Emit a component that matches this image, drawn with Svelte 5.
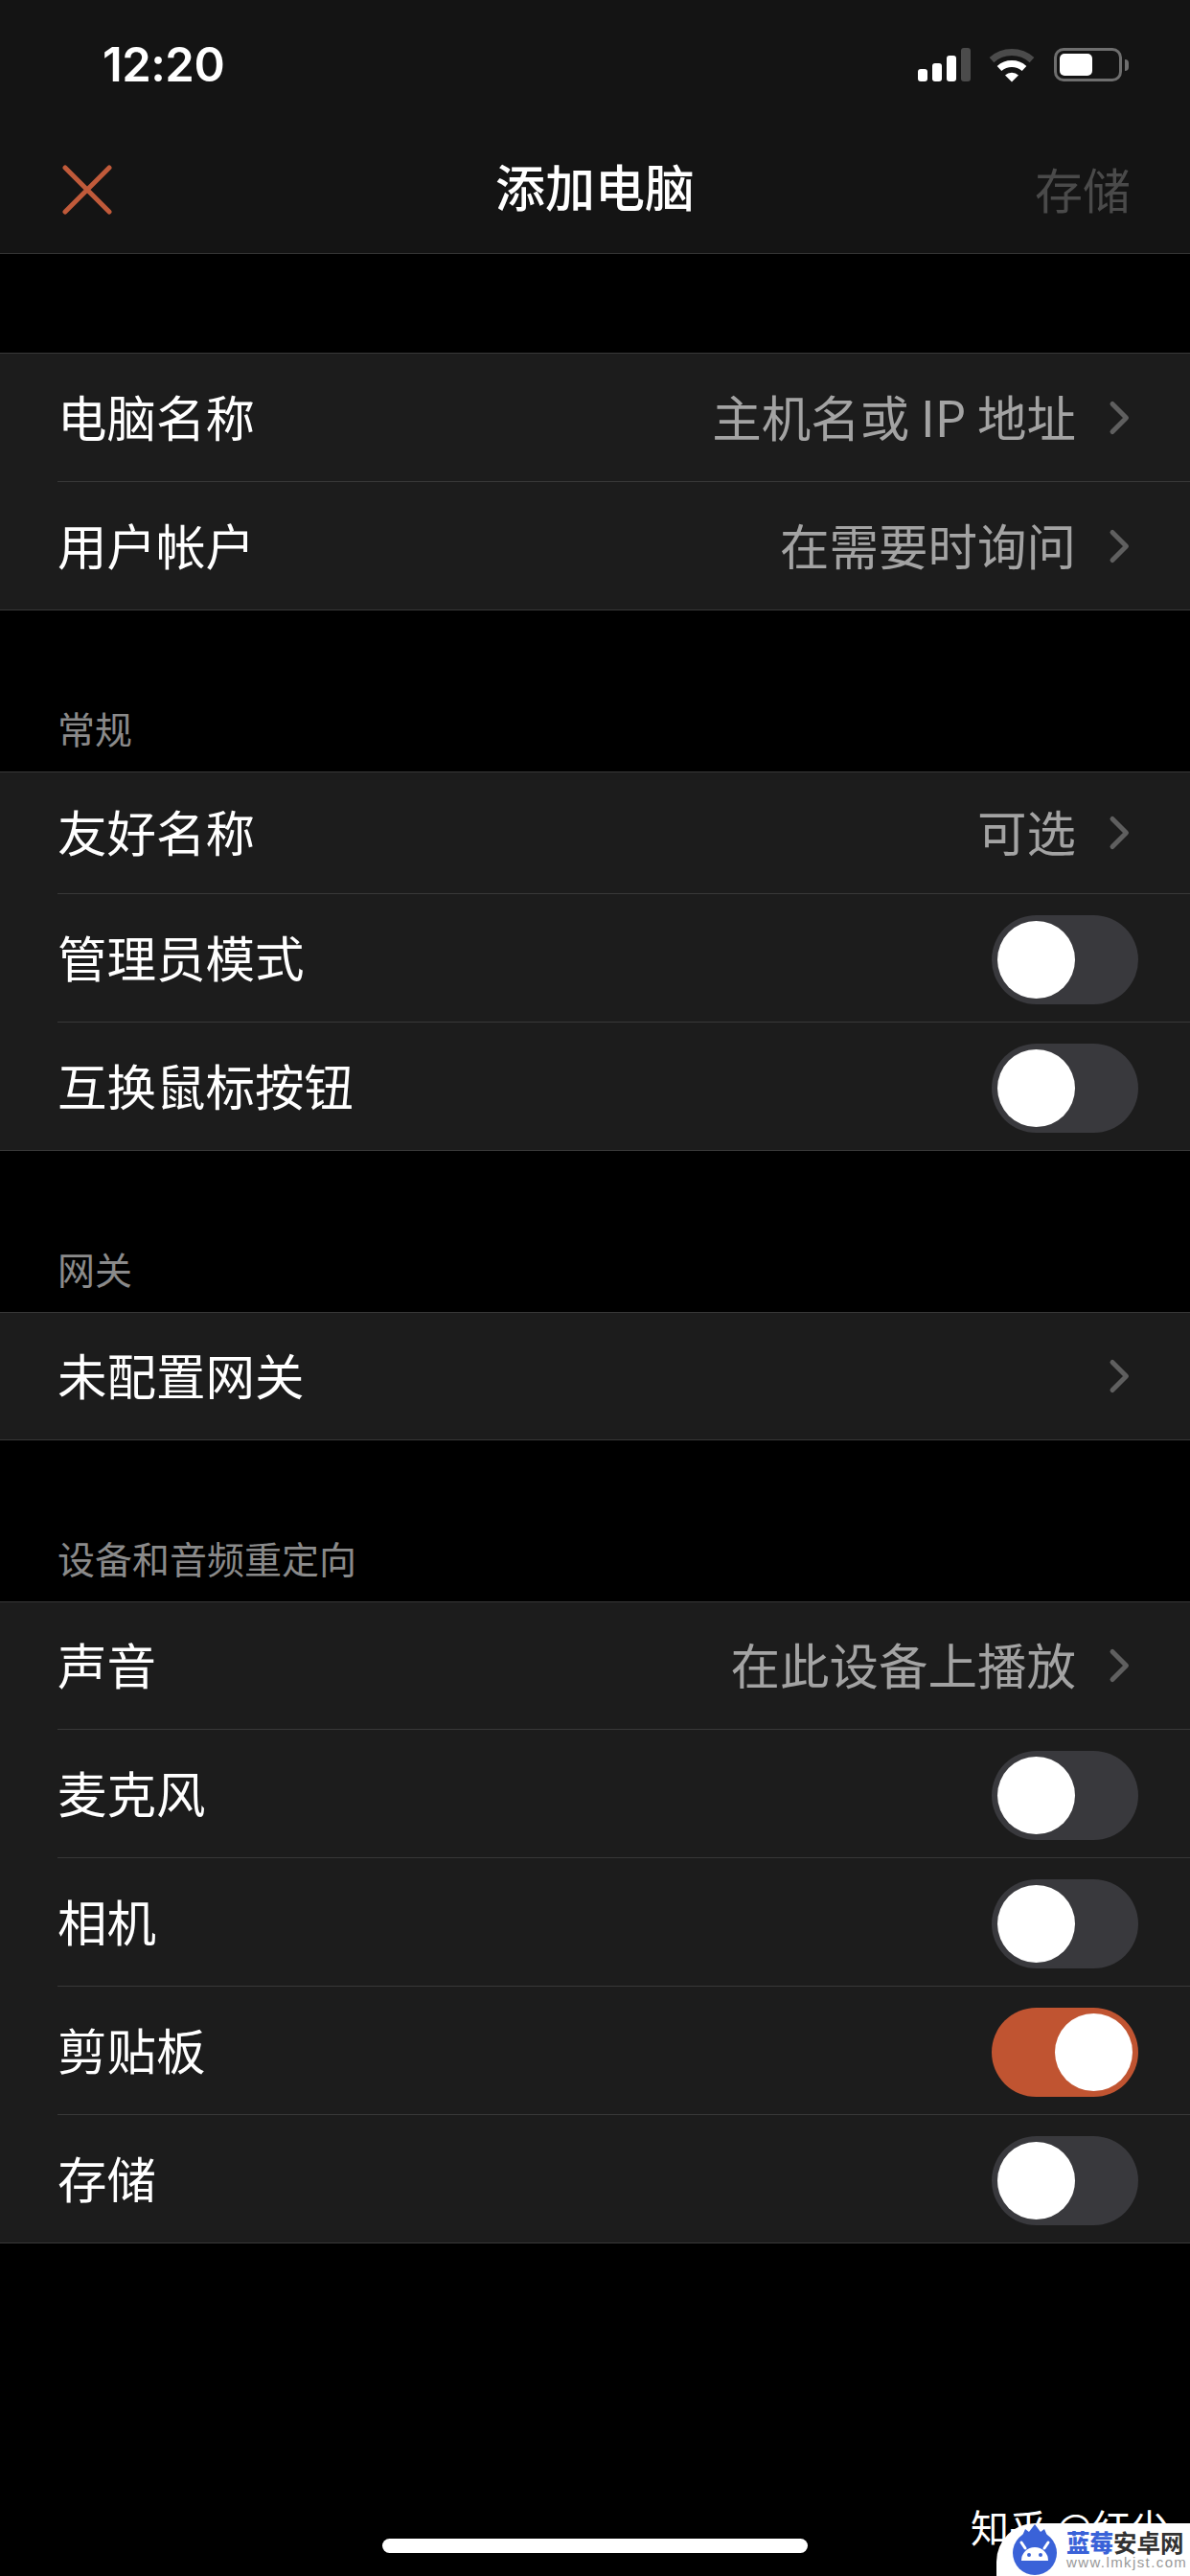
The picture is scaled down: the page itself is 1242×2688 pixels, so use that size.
<script>
  const groups = [
    { label: '', rows: [
      { t: '电脑名称', v: '主机名或 IP 地址', h: 133 },
      { t: '用户帐户', v: '在需要时询问', h: 133 }
    ]},
    { label: '常规', rows: [
      { t: '友好名称', v: '可选', h: 126 },
      { t: '管理员模式', sw: false, h: 133 },
      { t: '互换鼠标按钮', sw: false, h: 133 }
    ]},
    { label: '网关', rows: [
      { t: '未配置网关', v: '', h: 132 }
    ]},
    { label: '设备和音频重定向', rows: [
      { t: '声音', v: '在此设备上播放', h: 132 },
      { t: '麦克风', sw: false, h: 133 },
      { t: '相机', sw: false, h: 133 },
      { t: '剪贴板', sw: true, h: 133 },
      { t: '存储', sw: false, h: 133 }
    ]}
  ];
</script>

<div class="page">
  <header class="head">
    <div class="status">
      <span class="time">12:20</span>
      <div class="indicators">
        <div class="signal">
          <i class="b1"></i><i class="b2"></i><i class="b3"></i><i class="b4"></i>
        </div>
        <svg class="wifi" width="48" height="36" viewBox="0 0 48 36" aria-hidden="true">
          <path d="M3 12.6A31.5 31.5 0 0 1 45 12.6" fill="none" stroke="#4b4b4b" stroke-width="7"/>
          <path d="M11 21.5A19.5 19.5 0 0 1 37 21.5" fill="none" stroke="#fff" stroke-width="7"/>
          <path d="M24 35.5L17 28.5A10 10 0 0 1 31 28.5Z" fill="#fff"/>
        </svg>
        <div class="battery"><div class="level"></div></div>
        <div class="tip"></div>
      </div>
    </div>
    <nav class="nav">
      <svg class="close" width="52" height="52" viewBox="0 0 52 52" aria-hidden="true">
        <path d="M3 3L49 49M49 3L3 49" stroke="#c05a3a" stroke-width="5" stroke-linecap="round"/>
      </svg>
      <span class="title">添加电脑</span>
      <span class="save">存储</span>
    </nav>
  </header>

  {#each groups as g, i}
    <div class="label" class:first={i === 0}>{g.label}</div>
    <section class="group">
      {#each g.rows as r, j}
        <div class="row" class:last={j === g.rows.length - 1} style="height:{r.h}px">
          <span class="name">{r.t}</span>
          {#if r.sw !== undefined}
            <span class="switch" class:on={r.sw}><span class="knob"></span></span>
          {:else}
            <span class="value">{r.v}</span>
            <svg class="chev" width="24" height="38" viewBox="0 0 24 38" aria-hidden="true">
              <path d="M5 4.5L19.5 19L5 33.5" fill="none" stroke="#5f5f5f" stroke-width="5" stroke-linecap="round" stroke-linejoin="round"/>
            </svg>
          {/if}
        </div>
      {/each}
    </section>
  {/each}

  <div class="zhihu">知乎 @红尖</div>
  <div class="home"></div>

  <div class="mark">
    <svg class="logo" width="46" height="54" viewBox="0 0 46 54" aria-hidden="true">
      <path d="M10 13L13 6L17 9L23 1L29 9L33 6L36 13Z" fill="#3a62d8"/>
      <circle cx="23" cy="31" r="23" fill="#3a62d8"/>
      <path d="M9 39A14 14 0 0 1 37 39Z" fill="#fff"/>
      <path d="M13 26L9 20M33 26L37 20" stroke="#fff" stroke-width="3" stroke-linecap="round"/>
      <circle cx="17" cy="33" r="2" fill="#3a62d8"/>
      <circle cx="29" cy="33" r="2" fill="#3a62d8"/>
    </svg>
    <div class="brand">
      <div class="cn"><b>蓝莓</b>安卓网</div>
      <div class="url">www.lmkjst.com</div>
    </div>
  </div>
</div>

<style>
  :global(body) {
    margin: 0;
    background: #000;
  }
  .page {
    position: relative;
    width: 1242px;
    height: 2688px;
    overflow: hidden;
    background: #000;
    color: #fff;
    font-family: "Noto Sans CJK SC", "Noto Sans", sans-serif;
  }
  .head {
    height: 264px;
    background: #141414;
    border-bottom: 1px solid #343434;
    display: flex;
    flex-direction: column;
  }
  .status {
    height: 134px;
    display: flex;
    justify-content: space-between;
    padding: 0 64px 0 107px;
    flex: none;
  }
  .time {
    font-family: Inter, sans-serif;
    font-weight: 600;
    font-size: 49px;
    line-height: 58px;
    margin-top: 39px;
    letter-spacing: -0.5px;
  }
  .indicators {
    display: flex;
    align-items: flex-start;
    padding-top: 50px;
  }
  .signal {
    display: flex;
    align-items: flex-end;
    gap: 5px;
    height: 35px;
  }
  .signal i {
    display: block;
    width: 10px;
    border-radius: 3px;
    background: #fff;
  }
  .b1 { height: 13px; }
  .b2 { height: 19px; }
  .b3 { height: 27px; }
  .signal .b4 { height: 35px; background: #4b4b4b; }
  .wifi {
    margin-left: 19px;
  }
  .battery {
    margin-left: 20px;
    width: 71px;
    height: 35px;
    box-sizing: border-box;
    border: 3px solid #6e6e6e;
    border-radius: 10px;
    padding: 3px;
  }
  .level {
    width: 34px;
    height: 100%;
    background: #fff;
    border-radius: 5px;
  }
  .tip {
    width: 4px;
    height: 12px;
    margin: 12px 0 0 3px;
    background: #6e6e6e;
    border-radius: 0 4px 4px 0;
  }
  .nav {
    flex: 1;
    display: flex;
    align-items: center;
    justify-content: space-between;
    padding: 0 62px 3px 65px;
    position: relative;
  }
  .title {
    position: absolute;
    left: 0;
    right: 0;
    top: 30px;
    text-align: center;
    font-size: 52px;
    font-weight: 500;
    line-height: 60px;
  }
  .save {
    font-size: 50px;
    line-height: 60px;
    color: #4a4a4a;
    margin-bottom: 3px;
  }
  .label {
    height: 168px;
    box-sizing: border-box;
    padding: 0 0 23px 60px;
    display: flex;
    align-items: flex-end;
    font-size: 39px;
    line-height: 46px;
    color: #8a8a8a;
  }
  .label.first {
    height: 103px;
    padding: 0;
  }
  .group {
    background: #1c1c1c;
    border-top: 1px solid #383838;
    border-bottom: 1px solid #383838;
    padding-left: 60px;
  }
  .row {
    display: flex;
    align-items: center;
    padding-right: 54px;
    border-bottom: 1px solid #383838;
  }
  .row.last {
    border-bottom: none;
  }
  .name {
    flex: 1;
    font-size: 51.5px;
    line-height: 60px;
    margin-bottom: 4px;
  }
  .value {
    font-size: 51.5px;
    line-height: 60px;
    color: #a3a3a3;
    margin: 0 33px 4px 0;
  }
  .chev {
    margin-right: 8px;
    flex: none;
  }
  .switch {
    display: block;
    position: relative;
    width: 153px;
    height: 93px;
    border-radius: 47px;
    background: #39393d;
    flex: none;
    margin-top: 3px;
  }
  .switch.on {
    background: #c05431;
  }
  .knob {
    position: absolute;
    top: 6px;
    left: 6px;
    width: 81px;
    height: 81px;
    border-radius: 50%;
    background: #fff;
  }
  .on .knob {
    left: 66px;
  }
  .zhihu {
    position: absolute;
    left: 1013px;
    top: 2612px;
    font-size: 40px;
    line-height: 48px;
    white-space: nowrap;
  }
  .home {
    position: absolute;
    left: 399px;
    top: 2649px;
    width: 444px;
    height: 15px;
    border-radius: 8px;
    background: #fff;
  }
  .mark {
    position: absolute;
    left: 1040px;
    top: 2633px;
    width: 202px;
    height: 55px;
    box-sizing: border-box;
    padding-left: 17px;
    background: #fff;
    border-radius: 40px 0 0 0;
    display: flex;
  }
  .logo {
    flex: none;
    margin-top: 0;
    height: 54px;
  }
  .brand {
    margin-left: 10px;
    padding-top: 7px;
    width: 125px;
  }
  .cn {
    font-size: 24.5px;
    line-height: 26px;
    font-weight: 700;
    color: #333;
    white-space: nowrap;
  }
  .cn b {
    color: #3a62d8;
  }
  .url {
    font-family: "Liberation Sans", sans-serif;
    font-size: 15px;
    line-height: 15px;
    letter-spacing: 1.4px;
    color: #999;
    white-space: nowrap;
  }
</style>
